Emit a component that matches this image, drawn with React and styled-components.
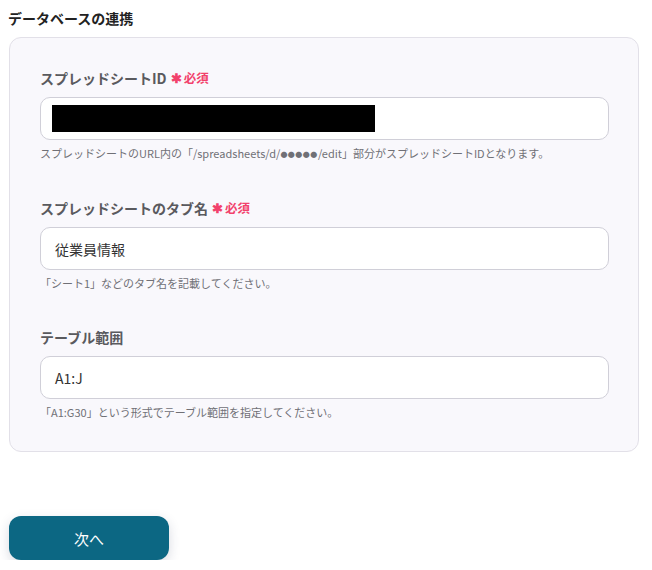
import { createGlobalStyle, styled } from 'styled-components';

const GlobalStyle = createGlobalStyle`
    * { box-sizing: border-box; }
    body {
        margin: 0;
        background: #ffffff;
        font-family: "Noto Sans CJK JP", "Noto Sans", sans-serif;
    }
`;

const Page = styled.div`
    padding: 8px 14px 0 9px;
`;

const Title = styled.h2`
    margin: 0 0 9px -1px;
    font-size: 14px;
    line-height: 20px;
    font-weight: 700;
    color: #222;
`;

const Panel = styled.div`
    width: 630px;
    background: #f9f8fc;
    border: 1px solid #e2e0e8;
    border-radius: 12px;
    padding: 30px 29px 31px 30px;
    display: flex;
    flex-direction: column;
    gap: 36px;
`;

const Field = styled.div`
    display: flex;
    flex-direction: column;
`;

const Label = styled.div`
    display: flex;
    align-items: center;
    gap: 4px;
    height: 20px;
    font-size: 14px;
    line-height: 20px;
    font-weight: 700;
    color: #5a5a5e;
    margin-bottom: 9px;
`;

const Required = styled.span`
    display: flex;
    align-items: center;
    gap: 2px;
    color: #f2416b;
    font-size: 12.5px;
    font-weight: 700;
`;

const Star = styled.span`
    font-size: 13px;
`;

const Input = styled.div`
    height: 43px;
    background: #fff;
    border: 1px solid #d0cfd8;
    border-radius: 10px;
    padding: 0 14px;
    display: flex;
    align-items: center;
    font-size: 14px;
    color: #333;
`;

const Redacted = styled.div`
    width: 323px;
    height: 27px;
    margin-left: -3px;
    background: #000;
`;

const Help = styled.div`
    margin-top: 5px;
    font-size: 11px;
    line-height: 16px;
    color: #707076;
`;

const Dots = styled.span`
    font-size: 7px;
    letter-spacing: 0.5px;
    vertical-align: 1px;
`;

const Footer = styled.div`
    margin-top: 64px;
`;

const NextButton = styled.button`
    width: 160px;
    height: 44px;
    border: none;
    border-radius: 12px;
    background: #0c6783;
    color: #fff;
    font-family: inherit;
    font-size: 15px;
    box-shadow: 0 4px 12px rgba(40, 50, 90, 0.18);
`;

const fields = [
    {
        label: 'スプレッドシートID',
        required: true,
        value: null,
        help: (
            <>
                スプレッドシートのURL内の「/spreadsheets/d/<Dots>●●●●●</Dots>/edit」部分がスプレッドシートIDとなります。
            </>
        ),
    },
    {
        label: 'スプレッドシートのタブ名',
        required: true,
        value: '従業員情報',
        help: '「シート1」などのタブ名を記載してください。',
    },
    {
        label: 'テーブル範囲',
        required: false,
        value: 'A1:J',
        help: '「A1:G30」という形式でテーブル範囲を指定してください。',
    },
];

function App() {
    return (
        <Page>
            <GlobalStyle />
            <Title>データベースの連携</Title>
            <Panel>
                {fields.map((f) => (
                    <Field key={f.label}>
                        <Label>
                            {f.label}
                            {f.required && (
                                <Required>
                                    <Star>✱</Star>必須
                                </Required>
                            )}
                        </Label>
                        <Input>{f.value === null ? <Redacted /> : f.value}</Input>
                        <Help>{f.help}</Help>
                    </Field>
                ))}
            </Panel>
            <Footer>
                <NextButton>次へ</NextButton>
            </Footer>
        </Page>
    );
}

export default App;
